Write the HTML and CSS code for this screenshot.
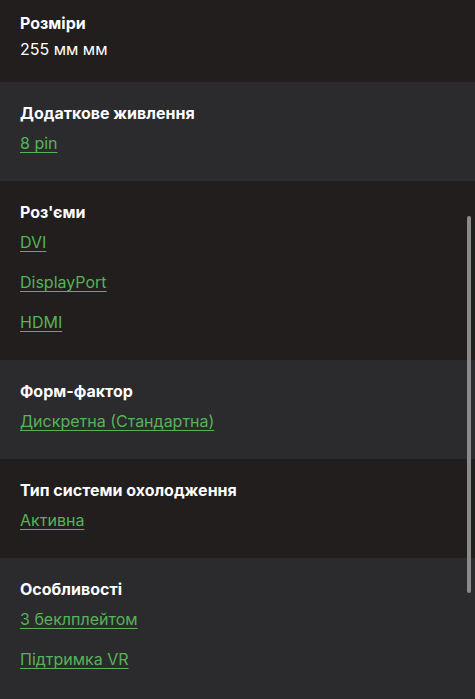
FILE: index.html
```html
<!DOCTYPE html>
<html lang="uk">
<head>
<meta charset="utf-8">
<link rel="stylesheet" href="styles.css">
</head>
<body>
<div class="specs">
  <section class="spec dark first">
    <div class="title">Розміри</div>
    <div class="value">255 мм мм</div>
  </section>
  <section class="spec light">
    <div class="title">Додаткове живлення</div>
    <div class="links"><a href="#">8 pin</a></div>
  </section>
  <section class="spec dark">
    <div class="title">Роз'єми</div>
    <div class="links"><a href="#">DVI</a><a href="#">DisplayPort</a><a href="#">HDMI</a></div>
  </section>
  <section class="spec light">
    <div class="title">Форм-фактор</div>
    <div class="links"><a href="#">Дискретна (Стандартна)</a></div>
  </section>
  <section class="spec dark">
    <div class="title">Тип системи охолодження</div>
    <div class="links"><a href="#">Активна</a></div>
  </section>
  <section class="spec light">
    <div class="title">Особливості</div>
    <div class="links"><a href="#">З беклплейтом</a><a href="#">Підтримка VR</a></div>
  </section>
</div>
<div class="scrollbar"></div>
</body>
</html>
```
FILE: styles.css
```css
html, body {
  margin: 0;
  padding: 0;
  background: #2b2a2c;
  height: 100%;
  overflow: hidden;
}
body {
  font-family: Inter, "Noto Sans", sans-serif;
  color: #ffffff;
}
.specs {
  display: flex;
  flex-direction: column;
}
.spec {
  padding: 20px 20px 27px;
  display: flex;
  flex-direction: column;
}
.spec.first {
  padding-top: 12px;
  padding-bottom: 22px;
}
.dark { background: #221e1e; }
.light { background: #2b2a2c; }
.title {
  font-size: 16px;
  font-weight: 700;
  line-height: 22px;
}
.value {
  margin-top: 4px;
  font-size: 16px;
  line-height: 22px;
  font-weight: 400;
}
.links {
  margin-top: 8px;
  display: flex;
  flex-direction: column;
  align-items: flex-start;
  gap: 18px;
}
.links a {
  font-size: 16px;
  line-height: 22px;
  color: #56b35a;
  text-decoration: underline;
  text-decoration-thickness: 1px;
  text-underline-offset: 3px;
}
.scrollbar {
  position: fixed;
  left: 467px;
  top: 216px;
  width: 4px;
  height: 377px;
  border-radius: 2px;
  background: #8a8a8a;
}
```
